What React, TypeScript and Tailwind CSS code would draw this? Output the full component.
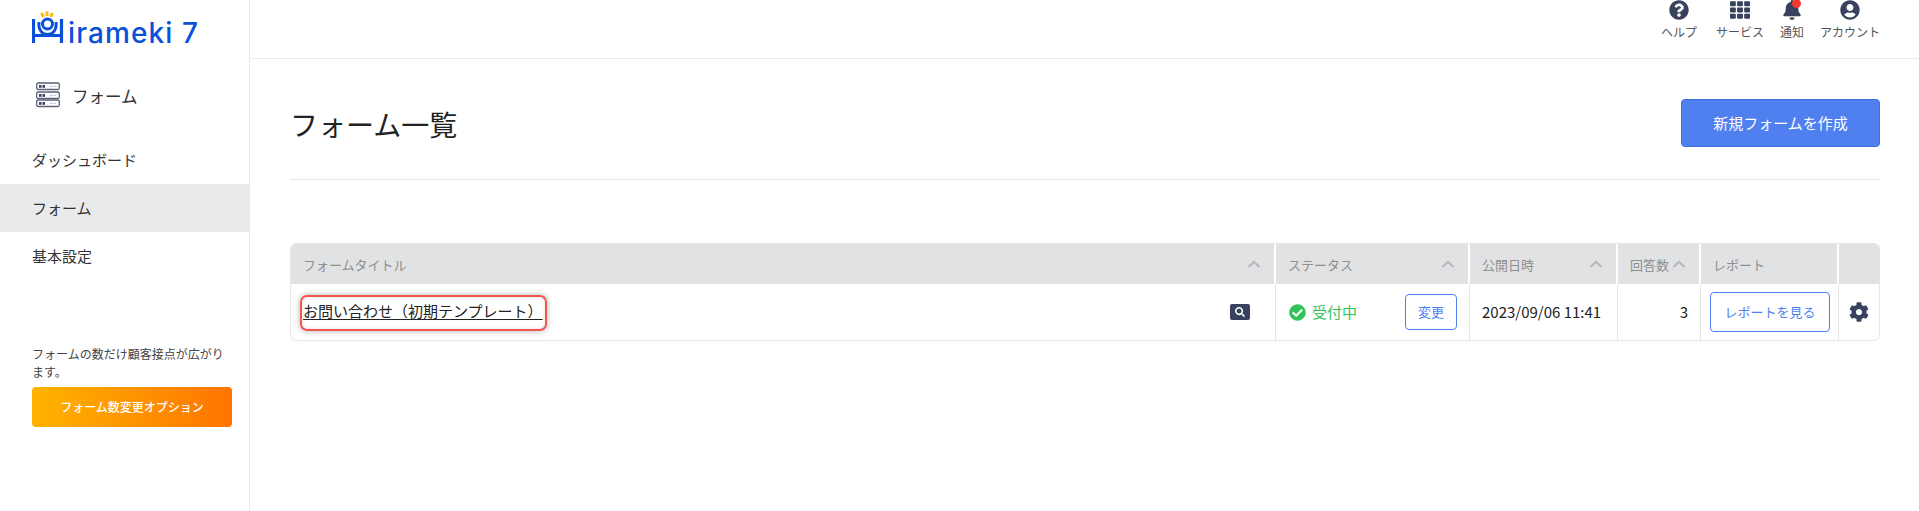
import type { ReactNode } from "react";
import { FaQuestionCircle, FaTh, FaBell, FaUserCircle, FaCog, FaCheckCircle, FaSearch } from "react-icons/fa";

const font = '"Noto Sans CJK JP","Noto Sans",sans-serif';

function Caret() {
  return (
    <svg width="14" height="8" viewBox="0 0 14 8" fill="none" className="shrink-0">
      <path d="M1.5 7 L7 1.8 L12.5 7" stroke="#b4b6b9" strokeWidth="2" />
    </svg>
  );
}

function Logo() {
  return (
    <div className="flex items-start h-[34px]">
      <svg width="36" height="34" viewBox="0 0 36 34" className="shrink-0">
        <path d="M9.5 3 L11.5 7 M15 1.5 V6 M20.5 3 L18.5 7" stroke="#fdbb0f" strokeWidth="3" fill="none" />
        <path d="M1.5 9 V33 M29.5 9 V33 M1.5 25.5 H29.5" fill="none" stroke="#0b50d8" strokeWidth="3.2" />
        <path d="M7 12 C6 21 11 24.5 15.5 24.5 C20 24.5 25 21 24 12" fill="none" stroke="#0b50d8" strokeWidth="3" />
        <circle cx="15.5" cy="14" r="5" fill="none" stroke="#0b50d8" strokeWidth="3" />
      </svg>
      <span className="text-[#0b50d8] text-[28px] leading-[34px] mt-[6px] font-medium tracking-[1.1px] whitespace-nowrap [font-family:Inter,sans-serif]">irameki 7</span>
    </div>
  );
}

function HeaderItem({ icon, label, dot, cls }: { icon: ReactNode; label: string; dot?: boolean; cls?: string }) {
  return (
    <div className={`flex flex-col items-center ${cls ?? ""}`}>
      <div className="relative h-[20px] flex items-center justify-center text-[#39425c] text-[20px]">
        {icon}
        {dot && <span className="absolute -top-[1px] left-[10px] w-[9px] h-[9px] rounded-full bg-[#f6382f]" />}
      </div>
      <span className="text-[12px] leading-[16px] mt-[4px] text-[#555]">{label}</span>
    </div>
  );
}

function Th({ label, w, caret = true, flex }: { label?: string; w?: string; caret?: boolean; flex?: boolean }) {
  return (
    <div className={`${flex ? "flex-1" : w} h-full flex items-center justify-between pl-[12px] pr-[13px] border-r-2 border-white last:border-r-0 text-[#8e8e8e] text-[13px]`}>
      <span className="mt-[1px]">{label}</span>
      {caret && <Caret />}
    </div>
  );
}

export default function App() {
  return (
    <div className="flex w-[1919px] h-[511px] bg-white overflow-hidden text-[#222] [text-spacing-trim:space-all]" style={{ fontFamily: font }}>
      <aside className="w-[250px] shrink-0 h-full border-r border-[#e9eaec] flex flex-col">
        <div className="pl-[32px] pt-[10px]">
          <Logo />
        </div>
        <div className="flex items-center pl-[36px] mt-[38px] gap-[12px]">
          <svg width="24" height="26" viewBox="0 0 24 26" fill="none">
            {[1, 10, 18].map((y) => (
              <g key={y}>
                <rect x="0.7" y={y} width="22.6" height="6.5" rx="1.5" fill="#fff" stroke="#5b6279" strokeWidth="1.3" />
                <rect x="3" y={y + 2} width="2.5" height="2.8" fill="#39425c" />
                <rect x="6.5" y={y + 2} width="2.5" height="2.8" fill="#39425c" />
                <path d={`M14 ${y + 3.3} H21`} stroke="#8fa9e8" strokeWidth="1" strokeDasharray="1.4 1" />
              </g>
            ))}
          </svg>
          <span className="text-[16.5px] leading-[24px] mt-[2px] text-[#333]">フォーム</span>
        </div>
        <nav className="mt-[28px] flex flex-col">
          <div className="h-[48px] flex items-center pl-[32px] text-[15px] text-[#333]">ダッシュボード</div>
          <div className="h-[48px] flex items-center pl-[32px] text-[15px] text-[#333] bg-[#e9eaec]">フォーム</div>
          <div className="h-[48px] flex items-center pl-[32px] text-[15px] text-[#333]">基本設定</div>
        </nav>
        <div className="pl-[32px] pr-[17px] mt-[65px]">
          <p className="text-[12px] leading-[18px] text-[#444]">フォームの数だけ顧客接点が広がります。</p>
          <div className="w-[200px] h-[40px] mt-[6px] rounded-[4px] flex items-center justify-center text-white text-[12px] font-medium bg-gradient-to-r from-[#ffb300] to-[#ff7300]">
            フォーム数変更オプション
          </div>
        </div>
      </aside>
      <div className="flex-1 flex flex-col min-w-0">
        <header className="h-[59px] shrink-0 border-b border-[#e9eaec] flex justify-end items-start gap-[16px] pr-[39px]">
          <HeaderItem icon={<FaQuestionCircle />} label="ヘルプ" cls="mr-[3px]" />
          <HeaderItem icon={<FaTh />} label="サービス" />
          <HeaderItem icon={<FaBell />} label="通知" dot />
          <HeaderItem icon={<FaUserCircle />} label="アカウント" />
        </header>
        <main className="px-[40px] pr-[39px] flex-1">
          <div className="flex items-center justify-between h-[121px] border-b border-[#e4e5e7]">
            <h1 className="text-[28px] leading-[40px] text-[#222] mt-[10px]">フォーム一覧</h1>
            <div className="w-[199px] h-[48px] mt-[8px] rounded-[4px] bg-[#507ff0] text-white text-[15px] flex items-center justify-center border border-[#3f6fe0]">
              新規フォームを作成
            </div>
          </div>
          <div className="mt-[63px] rounded-[6px] border border-[#e4e5e7] overflow-hidden">
            <div className="flex h-[40px] bg-[#e1e2e4] items-center">
              <Th label="フォームタイトル" w="w-[985px]" />
              <Th label="ステータス" w="w-[194px]" />
              <Th label="公開日時" w="w-[148px]" />
              <Th label="回答数" w="w-[83px]" />
              <Th label="レポート" w="w-[138px]" caret={false} />
              <Th flex caret={false} />
            </div>
            <div className="flex h-[56px] items-center text-[15px]">
              <div className="w-[985px] h-full border-r border-[#e4e5e7] flex items-center justify-between pl-[12px] pr-[25px]">
                <span className="relative leading-[24px] -mt-[2px] text-[#222] underline underline-offset-[2px] decoration-[1px]">
                  お問い合わせ（初期テンプレート）
                  <span className="absolute -left-[3px] -right-[4px] -top-[4px] -bottom-[8px] rounded-[7px] border-2 border-[#f2564f] shadow-[0_0_6px_rgba(0,0,0,0.3),inset_0_0_4px_rgba(0,0,0,0.12)]" />
                </span>
                <span className="w-[20px] h-[16px] bg-[#39425c] rounded-[2px] flex items-center justify-center text-white text-[10px]">
                  <FaSearch />
                </span>
              </div>
              <div className="w-[194px] h-full border-r border-[#e4e5e7] flex items-center justify-between pl-[13px] pr-[12px]">
                <span className="flex items-center gap-[6px] text-[#33c25a]">
                  <FaCheckCircle className="text-[17px]" />
                  受付中
                </span>
                <span className="w-[52px] h-[36px] rounded-[4px] border border-[#507ff0] text-[#507ff0] text-[13px] flex items-center justify-center">変更</span>
              </div>
              <div className="w-[148px] h-full border-r border-[#e4e5e7] flex items-center pl-[12px] text-[15px] text-[#222] whitespace-nowrap">2023/09/06 11:41</div>
              <div className="w-[83px] h-full border-r border-[#e4e5e7] flex items-center justify-end pr-[12px] text-[#222]">3</div>
              <div className="w-[138px] h-full border-r border-[#e4e5e7] flex items-center pl-[9px]">
                <span className="w-[120px] h-[40px] rounded-[4px] border border-[#507ff0] text-[#507ff0] text-[13px] flex items-center justify-center">レポートを見る</span>
              </div>
              <div className="flex-1 flex items-center justify-center text-[#39425c] text-[20px]">
                <FaCog />
              </div>
            </div>
          </div>
        </main>
      </div>
    </div>
  );
}
